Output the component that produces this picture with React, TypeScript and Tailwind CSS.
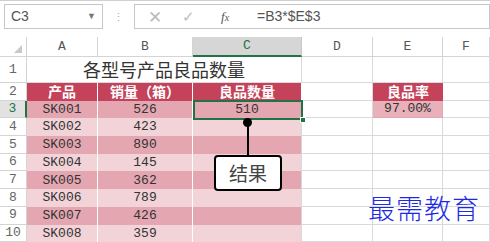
import React from 'react';

const rows = [
  { id: 'SK001', qty: '526' },
  { id: 'SK002', qty: '423' },
  { id: 'SK003', qty: '890' },
  { id: 'SK004', qty: '145' },
  { id: 'SK005', qty: '362' },
  { id: 'SK006', qty: '789' },
  { id: 'SK007', qty: '426' },
  { id: 'SK008', qty: '359' },
];

const cols = ['A', 'B', 'C', 'D', 'E', 'F'];
const cjk = "font-['Noto_Sans_CJK_SC',sans-serif]";
const mono = "font-['Liberation_Mono','Noto_Sans_CJK_SC',monospace]";

function RowHead({ n, active }: { n: number; active?: boolean }) {
  return (
    <div
      className={`flex items-center justify-center border-b border-r border-[#d4d4d4] text-[13px] ${mono} ${
        active ? 'bg-[#e2e2e2] text-[#217346] border-r-[#217346] border-r-2' : 'bg-white text-[#666]'
      }`}
    >
      {n}
    </div>
  );
}

function Blank() {
  return <div className="border-b border-r border-[#d9d9d9] bg-white" />;
}

export default function App() {
  return (
    <div className="relative h-[242px] w-[490px] overflow-hidden bg-white">
      {/* 编辑栏 */}
      <div className="flex h-[37px] items-start border-t border-[#d0d0d0] pt-[3px]">
        <div className="ml-[4px] flex h-[25px] w-[99px] items-center justify-between border border-[#c6c6c6] px-[6px] font-['Liberation_Sans',sans-serif] text-[14px] text-[#555]">
          <span>C3</span>
          <span className="text-[9px] text-[#777]">▼</span>
        </div>
        <div className="flex h-[25px] w-[31px] items-center justify-center text-[11px] leading-none text-[#aaa]">⋮</div>
        <div className="flex h-[25px] flex-1 items-center border border-[#c6c6c6]">
          <div className="flex w-[110px] items-center">
            <span className="ml-[13px] text-[17px] leading-none text-[#bbb]">✕</span>
            <span className="ml-[20px] text-[15px] leading-none text-[#bbb]">✓</span>
            <span className="ml-[26px] font-['Liberation_Serif',serif] text-[13px] italic text-[#555]">
              f<span className="text-[10px]">x</span>
            </span>
          </div>
          <span className="ml-[12px] font-['Liberation_Sans',sans-serif] text-[14px] text-[#555]">=B3*$E$3</span>
        </div>
      </div>

      {/* 表格 */}
      <div className="grid grid-cols-[27px_71px_95px_109px_71px_70px_1fr] grid-rows-[20px_26px_repeat(9,17.7px)]">
        {/* 列标题 */}
        <div className="relative border-b border-r border-[#d4d4d4] bg-white">
          <span className="absolute bottom-[3px] right-[4px] h-0 w-0 border-b-[8px] border-l-[8px] border-b-[#c8c8c8] border-l-transparent" />
        </div>
        {cols.map((c) => (
          <div
            key={c}
            className={`flex items-center justify-center border-r text-[13px] ${mono} ${
              c === 'C'
                ? 'border-b-2 border-b-[#217346] border-r-[#c6c6c6] bg-[#d6d6d6] text-[#217346]'
                : 'border-b border-[#d4d4d4] bg-white text-[#555]'
            }`}
          >
            {c}
          </div>
        ))}

        {/* 第1行 */}
        <RowHead n={1} />
        <div className={`col-span-3 flex items-center justify-center border-b border-r border-[#d9d9d9] text-[18px] text-[#333] ${cjk}`}>
          各型号产品良品数量
        </div>
        <Blank />
        <Blank />
        <Blank />

        {/* 第2行 */}
        <RowHead n={2} />
        {['产品', '销量（箱）', '良品数量'].map((h) => (
          <div
            key={h}
            className={`flex items-center justify-center border-r border-white bg-[#c4435b] text-[14px] font-bold text-white ${cjk}`}
          >
            {h}
          </div>
        ))}
        <Blank />
        <div className={`flex items-center justify-center bg-[#c4435b] text-[14px] font-bold text-white ${cjk}`}>良品率</div>
        <Blank />

        {/* 数据行 */}
        {rows.map((r, i) => {
          const dark = i % 2 === 0;
          const bg = dark ? 'bg-[#e4a7b1]' : 'bg-[#f1d3d8]';
          return (
            <React.Fragment key={r.id}>
              <RowHead n={i + 3} active={i === 0} />
              <div className={`flex items-center justify-center border-r border-white text-[13px] text-[#333] ${mono} ${bg}`}>
                {r.id}
              </div>
              <div className={`flex items-center justify-center border-r border-white text-[13px] text-[#333] ${mono} ${bg}`}>
                {r.qty}
              </div>
              <div className={`flex items-center justify-center border-r border-[#d9d9d9] text-[13px] text-[#333] ${mono} ${bg}`}>
                {i === 0 ? '510' : ''}
              </div>
              <Blank />
              {i === 0 ? (
                <div className={`flex items-center justify-center border-b border-r border-[#e4a7b1] bg-[#e8b0b9] text-[13px] text-[#333] ${mono}`}>
                  97.00%
                </div>
              ) : (
                <Blank />
              )}
              <Blank />
            </React.Fragment>
          );
        })}
      </div>

      {/* 选中单元格 C3 */}
      <div className="absolute left-[193px] top-[100px] h-[20px] w-[110px] border-2 border-[#217346]" />
      <div className="absolute left-[300px] top-[117px] h-[6px] w-[6px] border border-white bg-[#217346]" />

      {/* 标注 */}
      <div className="absolute left-[243px] top-[118px] h-[9px] w-[9px] rounded-full bg-black" />
      <div className="absolute left-[247px] top-[122px] h-[34px] w-[2px] bg-black" />
      <div
        className={`absolute left-[214px] top-[155px] flex h-[36px] w-[68px] items-center justify-center rounded-[4px] border-2 border-black bg-white text-[19px] text-[#444] ${cjk}`}
      >
        结果
      </div>

      {/* 水印 */}
      <div className={`absolute left-[368px] top-[194px] text-[27px] font-light leading-none tracking-[1px] text-[#1c2ae6] ${cjk}`}>
        最需教育
      </div>
    </div>
  );
}
